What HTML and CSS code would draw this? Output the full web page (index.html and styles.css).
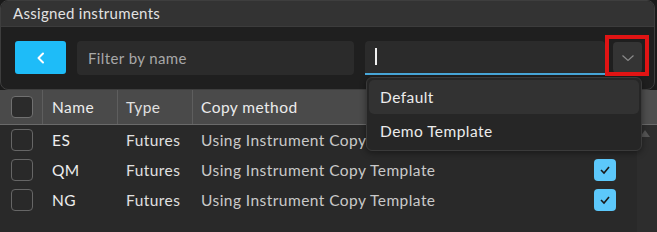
FILE: index.html
```html
<!DOCTYPE html>
<html>
<head>
<meta charset="utf-8">
<link rel="stylesheet" href="styles.css">
</head>
<body>
<div class="page">
  <div class="panel">
    <div class="title">Assigned instruments</div>
    <div class="toolbar">
      <div class="back">
        <svg width="12" height="14" viewBox="0 0 12 14"><path d="M8 2.5 L3.5 7 L8 11.5" fill="none" stroke="#fff" stroke-width="2" stroke-linecap="round" stroke-linejoin="round"/></svg>
      </div>
      <div class="filter">Filter by name</div>
      <div class="combo">
        <div class="combo-input"><span class="caret"></span></div>
        <div class="combo-btn">
          <svg width="14" height="8" viewBox="0 0 14 8"><path d="M1.5 1.5 L7 6.5 L12.5 1.5" fill="none" stroke="#8a8a8a" stroke-width="1.2"/></svg>
        </div>
      </div>
    </div>
  </div>
  <div class="grid-area">
    <div class="table">
      <div class="row head">
        <div class="cell c-check"><span class="box box-head"></span></div>
        <div class="cell c-name">Name</div>
        <div class="cell c-type">Type</div>
        <div class="cell c-copy">Copy method</div>
        <div class="cell c-last"></div>
      </div>
      <div class="row">
        <div class="cell c-check"><span class="box"></span></div>
        <div class="cell c-name">ES</div>
        <div class="cell c-type">Futures</div>
        <div class="cell c-copy">Using Instrument Copy Template</div>
        <div class="cell c-last"><span class="tick"><svg width="14" height="12" viewBox="0 0 14 12"><path d="M3 6 L6 9 L11 3" fill="none" stroke="#1a1a1a" stroke-width="1.6"/></svg></span></div>
      </div>
      <div class="row">
        <div class="cell c-check"><span class="box"></span></div>
        <div class="cell c-name">QM</div>
        <div class="cell c-type">Futures</div>
        <div class="cell c-copy">Using Instrument Copy Template</div>
        <div class="cell c-last"><span class="tick"><svg width="14" height="12" viewBox="0 0 14 12"><path d="M3 6 L6 9 L11 3" fill="none" stroke="#1a1a1a" stroke-width="1.6"/></svg></span></div>
      </div>
      <div class="row">
        <div class="cell c-check"><span class="box"></span></div>
        <div class="cell c-name">NG</div>
        <div class="cell c-type">Futures</div>
        <div class="cell c-copy">Using Instrument Copy Template</div>
        <div class="cell c-last"><span class="tick"><svg width="14" height="12" viewBox="0 0 14 12"><path d="M3 6 L6 9 L11 3" fill="none" stroke="#1a1a1a" stroke-width="1.6"/></svg></span></div>
      </div>
    </div>
    <div class="scrollbar">
      <div class="sb-head"></div>
      <div class="sb-track"><span class="sb-arrow"></span></div>
    </div>
  </div>

  <div class="dropdown">
    <div class="item active">Default</div>
    <div class="item">Demo Template</div>
  </div>
  <div class="highlight"></div>
</div>
</body>
</html>
```

FILE: styles.css
```css
* { box-sizing: border-box; }
html, body { margin: 0; padding: 0; }
body {
  background: #1a1a1a;
  font-family: "Lato", "Liberation Sans", sans-serif;
  font-size: 15px;
  color: #e6e6e6;
  width: 657px;
  height: 232px;
  overflow: hidden;
}
.page {
  position: relative;
  width: 657px;
  height: 232px;
  display: flex;
  flex-direction: column;
}
.panel {
  width: 655px;
  height: 90px;
  border: 1px solid #3e3e3e;
  border-radius: 8px;
  overflow: hidden;
  display: flex;
  flex-direction: column;
  background: #1f1f1f;
}
.title {
  height: 26px;
  background: #333333;
  border-bottom: 1px solid #3c3c3c;
  padding-left: 12px;
  line-height: 24px;
  color: #e2e2e2;
  letter-spacing: 0.3px;
}
.toolbar {
  flex: 1;
  display: flex;
  align-items: center;
  padding-left: 14px;
  padding-bottom: 1px;
}
.back {
  width: 51px;
  height: 33px;
  background: #1ebcf8;
  border-radius: 3px;
  display: flex;
  align-items: center;
  justify-content: center;
}
.filter {
  margin-left: 11px;
  width: 277px;
  height: 34px;
  background: #2b2b2b;
  border-radius: 4px;
  padding-left: 11px;
  line-height: 34px;
  color: #a8a8a8;
  letter-spacing: 0.4px;
}
.combo {
  margin-left: 11px;
  display: flex;
  align-items: center;
}
.combo-input {
  width: 240px;
  height: 34px;
  background: #2b2b2b;
  border-radius: 4px 4px 0 0;
  border-bottom: 2px solid #49a9dc;
  display: flex;
  align-items: center;
  padding-left: 10px;
}
.caret {
  width: 2px;
  height: 17px;
  background: #f0f0f0;
}
.combo-btn {
  margin-left: 8px;
  width: 29px;
  height: 31px;
  background: #343434;
  border-radius: 4px;
  display: flex;
  align-items: center;
  justify-content: center;
}
.grid-area {
  flex: 1;
  display: flex;
  background: #292929;
}
.table {
  width: 637px;
  display: flex;
  flex-direction: column;
}
.row {
  display: flex;
  height: 30px;
  align-items: center;
}
.row.head {
  height: 35px;
  background: #4a4a4a;
  border-bottom: 1px solid #6a6a6a;
  color: #ececec;
}
.cell {
  height: 100%;
  display: flex;
  align-items: center;
  white-space: nowrap;
  font-size: 15.5px;
  letter-spacing: 0.45px;
}
.row.head .cell { border-right: 1px solid #5e5e5e; }
.row.head .cell.c-last { border-right: none; }
.c-check { width: 43px; padding-left: 11px; }
.c-name { width: 75px; padding-left: 9px; color: #ededed; }
.c-type { width: 75px; padding-left: 8px; color: #e0e0e0; }
.c-copy { width: 387px; padding-left: 8px; color: #c9c9c9; }
.row.head .c-copy { color: #ececec; }
.c-last { flex: 1; padding-left: 14px; }
.box {
  width: 22px;
  height: 22px;
  border: 1px solid #666;
  border-radius: 4px;
}
.box-head { background: #2b2b2b; border-color: #707070; }
.tick {
  width: 22px;
  height: 22px;
  border-radius: 4px;
  background: #5cc8fb;
  display: flex;
  align-items: center;
  justify-content: center;
}
.scrollbar {
  width: 20px;
  display: flex;
  flex-direction: column;
}
.sb-head {
  height: 35px;
  background: #4e4e4e;
  border-bottom: 1px solid #6a6a6a;
}
.sb-track {
  flex: 1;
  background: #2d2d2d;
  display: flex;
  justify-content: center;
  padding-top: 5px;
  padding-right: 4px;
}
.sb-arrow {
  width: 0;
  height: 0;
  border-left: 5px solid transparent;
  border-right: 5px solid transparent;
  border-bottom: 7px solid #555;
}
.dropdown {
  position: absolute;
  left: 366px;
  top: 77px;
  width: 276px;
  height: 74px;
  background: #262626;
  border: 1px solid #3a3a3a;
  border-radius: 6px;
  padding: 2px 2px;
  box-shadow: 0 2px 6px rgba(0,0,0,0.4);
}
.item {
  height: 34px;
  line-height: 34px;
  padding-left: 11px;
  border-radius: 5px;
  color: #ececec;
  font-size: 15.5px;
  letter-spacing: 0.45px;
}
.item.active { background: #323232; }
.highlight {
  position: absolute;
  left: 605px;
  top: 35px;
  width: 44px;
  height: 41px;
  border: 4px solid #e11414;
}
```
